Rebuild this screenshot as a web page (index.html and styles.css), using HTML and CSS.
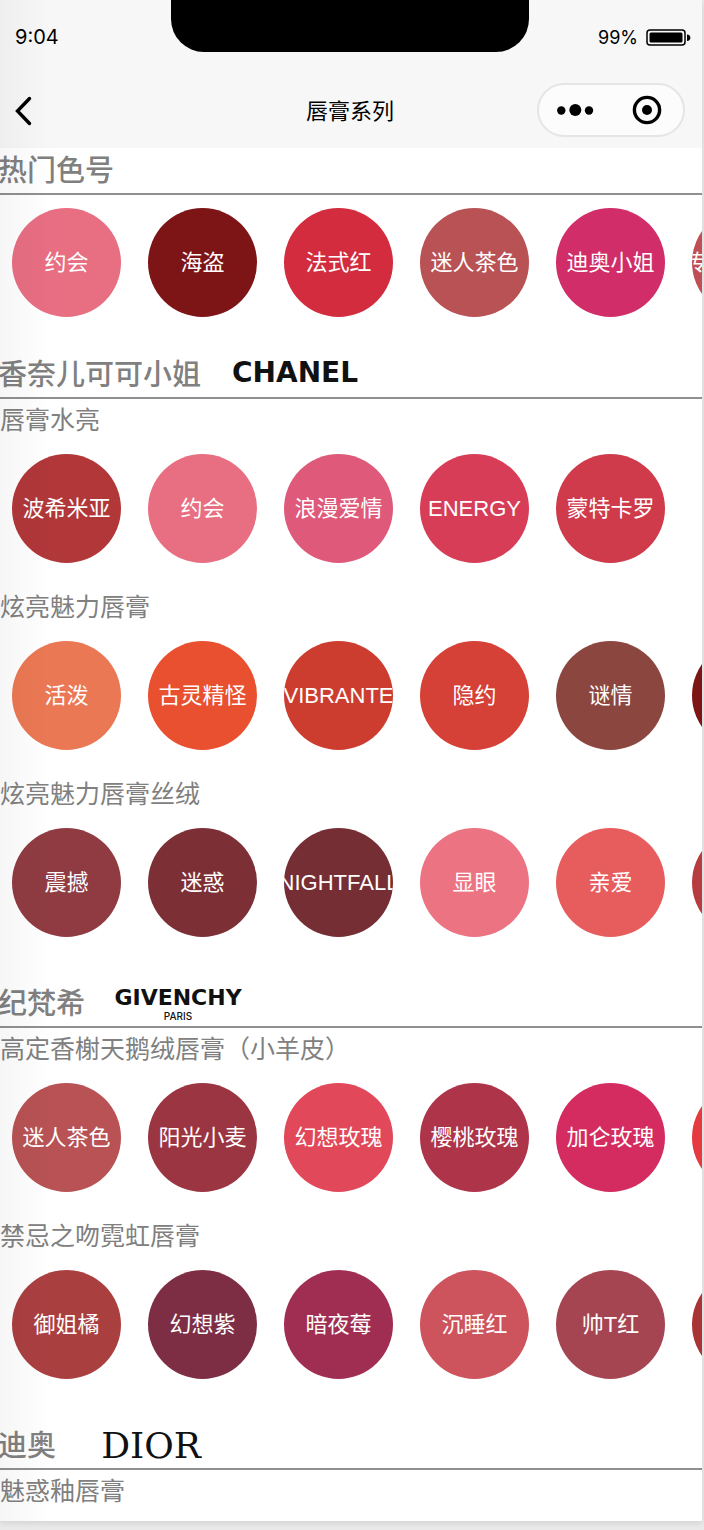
FILE: index.html
```html
<!DOCTYPE html>
<html lang="zh-CN">
<head>
<meta charset="utf-8">
<meta name="viewport" content="width=device-width, initial-scale=1">
<title>唇膏系列</title>
<link rel="stylesheet" href="styles.css">
</head>
<body>
<div class="phone">
  <header class="topbar">
    <div class="status">
      <span class="time">9:04</span>
      <div class="notch"></div>
      <div class="power">
        <span>99%</span>
        <svg width="46" height="18" viewBox="0 0 46 18" aria-hidden="true">
          <rect x="1" y="1" width="38" height="15" rx="3" fill="none" stroke="#000" stroke-width="1.5"/>
          <rect x="3.500" y="3.500" width="33" height="10" rx="1.500"/>
          <path d="M41 5.500c4.500 0 4.500 6.500 0 6.500z"/>
        </svg>
      </div>
    </div>
    <nav class="nav">
      <button class="back" aria-label="返回">
        <svg width="18" height="30" viewBox="0 0 18 30"><path d="M15.500 2.500L3.500 15l12 12.500" fill="none" stroke="#000" stroke-width="3.400" stroke-linecap="round" stroke-linejoin="miter"/></svg>
      </button>
      <h1 class="title">唇膏系列</h1>
      <div class="capsule">
        <button aria-label="更多">
          <svg width="38" height="14" viewBox="0 0 38 14"><circle cx="5.300" cy="7.500" r="4.200"/><circle cx="19.300" cy="7" r="6"/><circle cx="33" cy="7.500" r="4.200"/></svg>
        </button>
        <button aria-label="关闭">
          <svg width="30" height="30" viewBox="0 0 30 30"><circle cx="15" cy="15" r="12.600" fill="none" stroke="#000" stroke-width="3.400"/><circle cx="15" cy="15" r="5"/></svg>
        </button>
      </div>
    </nav>
  </header>

  <main>
    <section class="brand hot">
      <h2 class="brand-name">热门色号</h2>
      <ul class="shades">
        <li style="background:#e86e82">约会</li>
        <li style="background:#7d1416">海盗</li>
        <li style="background:#d22c3e">法式红</li>
        <li style="background:#b85254">迷人茶色</li>
        <li style="background:#d12d68">迪奥小姐</li>
        <li style="background:#c04f55">传奇红唇999</li>
      </ul>
    </section>

    <section class="brand">
      <h2 class="brand-name">香奈儿可可小姐 <span class="logo chanel">CHANEL</span></h2>
      <h3 class="series">唇膏水亮</h3>
      <ul class="shades">
        <li style="background:#b13739">波希米亚</li>
        <li style="background:#e86e82">约会</li>
        <li style="background:#df5a7a">浪漫爱情</li>
        <li style="background:#d83d58">ENERGY</li>
        <li style="background:#cf3b4b">蒙特卡罗</li>
      </ul>
      <h3 class="series">炫亮魅力唇膏</h3>
      <ul class="shades">
        <li style="background:#eb7854">活泼</li>
        <li style="background:#e85030">古灵精怪</li>
        <li style="background:#cd3d2f">VIBRANTE</li>
        <li style="background:#d54037">隐约</li>
        <li style="background:#8c4640">谜情</li>
        <li style="background:#7d1416"></li>
      </ul>
      <h3 class="series">炫亮魅力唇膏丝绒</h3>
      <ul class="shades">
        <li style="background:#903b42">震撼</li>
        <li style="background:#7d2f36">迷惑</li>
        <li style="background:#752e34">NIGHTFALL</li>
        <li style="background:#ec7382">显眼</li>
        <li style="background:#e75c5d">亲爱</li>
        <li style="background:#b73c40"></li>
      </ul>
    </section>

    <section class="brand">
      <h2 class="brand-name">纪梵希 <span class="logo givenchy">GIVENCHY<small>PARIS</small></span></h2>
      <h3 class="series">高定香榭天鹅绒唇膏（小羊皮）</h3>
      <ul class="shades">
        <li style="background:#b85254">迷人茶色</li>
        <li style="background:#9b3541">阳光小麦</li>
        <li style="background:#e14859">幻想玫瑰</li>
        <li style="background:#ae3449">樱桃玫瑰</li>
        <li style="background:#d42c60">加仑玫瑰</li>
        <li style="background:#e43a40"></li>
      </ul>
      <h3 class="series">禁忌之吻霓虹唇膏</h3>
      <ul class="shades">
        <li style="background:#aa3f40">御姐橘</li>
        <li style="background:#7e2e44">幻想紫</li>
        <li style="background:#a02e52">暗夜莓</li>
        <li style="background:#cd535d">沉睡红</li>
        <li style="background:#a64552">帅T红</li>
        <li style="background:#a83435"></li>
      </ul>
    </section>

    <section class="brand last">
      <h2 class="brand-name">迪奥 <span class="logo dior">DIOR</span></h2>
      <h3 class="series">魅惑釉唇膏</h3>
    </section>
  </main>
</div>
</body>
</html>
```
FILE: styles.css
```css
* {
  box-sizing: border-box;
}

body {
  margin: 0;
  padding: 0 2px 9px 0;
  background: #e9e9e9;
  font-family: "Liberation Sans", "Noto Sans CJK SC", sans-serif;
}

.phone {
  position: relative;
  overflow: hidden;
  background: #fff;
  box-shadow: 0 2px 6px rgba(0, 0, 0, 0.1);
}

/* soft shade along the left edge of the screen */
.phone::after {
  content: "";
  position: absolute;
  top: 0;
  bottom: 0;
  left: 0;
  width: 52px;
  background: linear-gradient(to right, rgba(0, 0, 0, 0.035), rgba(0, 0, 0, 0));
  pointer-events: none;
}

.topbar {
  background: #f7f7f7;
}

.status,
.nav {
  display: grid;
  grid-template-columns: 1fr auto 1fr;
  height: 74px;
}

.status {
  font-family: Inter, sans-serif;
  font-size: 20px;
  line-height: 24px;
}

.time {
  padding: 25px 0 0 15px;
}

.notch {
  width: 358px;
  height: 52px;
  margin-right: 2px;
  background: #000;
  border-radius: 0 0 33px 33px;
}

.power {
  display: flex;
  align-items: center;
  justify-content: flex-end;
  gap: 8px;
  padding: 2px 10px 0 0;
  font-size: 18px;
}

.nav {
  align-items: center;
}

button {
  display: grid;
  place-items: center;
  padding: 0;
  border: 0;
  background: none;
}

.back {
  margin-left: 14px;
  justify-self: start;
}

.title {
  margin: 0;
  padding: 2px 2px 0 0;
  font-size: 22px;
  font-weight: 400;
  line-height: 32px;
}

.capsule {
  display: grid;
  grid-template-columns: 1fr 1fr;
  justify-self: end;
  width: 148px;
  height: 54px;
  margin: 0 17px 2px 0;
  background: #fcfcfc;
  border: 2px solid #e5e5e5;
  border-radius: 27px;
}

.brand {
  padding-bottom: 21px;
}

.hot {
  padding-bottom: 12px;
}

.last {
  padding-bottom: 9px;
}

.brand-name {
  display: flex;
  align-items: center;
  height: 47px;
  margin: 0 0 0 -2px;
  border-bottom: 2px solid #909090;
  color: #808080;
  font-size: 29px;
  font-weight: 500;
  line-height: 44px;
}

.logo {
  text-align: center;
  color: #111;
  font-family: "DejaVu Sans", sans-serif;
  font-weight: 700;
  line-height: 36px;
}

.chanel {
  width: 144px;
  margin: 0 0 4px 22px;
  font-size: 28px;
}

.givenchy {
  width: 162px;
  margin-left: 12px;
  font-size: 22px;
  line-height: 24px;
}

.givenchy small {
  display: block;
  font-family: Inter, sans-serif;
  font-size: 10px;
  font-weight: 500;
  line-height: 12px;
}

.dior {
  width: 126px;
  margin-left: 32px;
  font-family: "DejaVu Serif", serif;
  font-size: 36px;
  font-weight: 400;
}

.series {
  height: 42px;
  margin: 0;
  color: #808080;
  font-size: 25px;
  font-weight: 400;
  line-height: 42px;
  white-space: nowrap;
}

.shades {
  display: flex;
  gap: 27px;
  margin: 0;
  padding: 13px 12px 23px;
  overflow: hidden;
  list-style: none;
}

.shades li {
  flex: none;
  width: 109px;
  height: 109px;
  display: flex;
  align-items: center;
  justify-content: center;
  overflow: hidden;
  border-radius: 50%;
  color: #fff;
  font-size: 22px;
  font-weight: 400;
  line-height: 28px;
  white-space: nowrap;
}
```
